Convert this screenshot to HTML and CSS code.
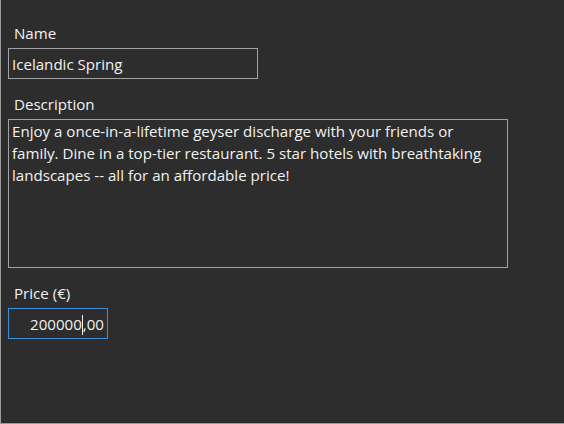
FILE: index.html
```html
<!DOCTYPE html>
<html>
<head>
<meta charset="utf-8">
<link rel="stylesheet" href="styles.css">
</head>
<body>
<div class="window">
  <div class="form">
    <div class="label">Name</div>
    <div class="field name">Icelandic Spring</div>
    <div class="label desc-label">Description</div>
    <div class="field area">Enjoy a once-in-a-lifetime geyser discharge with your friends or family. Dine in a top-tier restaurant. 5 star hotels with breathtaking landscapes -- all for an affordable price!</div>
    <div class="label price-label">Price (€)</div>
    <div class="field price focused">200000<span class="caret"></span>,00</div>
  </div>
</div>
</body>
</html>
```
FILE: styles.css
```css
html, body {
  margin: 0;
  padding: 0;
  background: #2d2d2d;
}
.window {
  width: 564px;
  height: 424px;
  box-sizing: border-box;
  border-left: 1px solid #9a9a9a;
  border-bottom: 1px solid #9a9a9a;
  background: #2d2d2d;
  font-family: "Open Sans", "Noto Sans", sans-serif;
  font-size: 15.1px;
  color: #f2f2f2;
}
.form {
  display: flex;
  flex-direction: column;
  align-items: flex-start;
  padding: 23px 0 0 7px;
}
.label {
  line-height: 20px;
  margin-left: 6px;
  margin-bottom: 5px;
}
.desc-label { margin-top: 15px; margin-bottom: 5px; }
.price-label { margin-top: 15px; margin-bottom: 5px; }
.field {
  box-sizing: border-box;
  border: 1px solid #a3a3a3;
  line-height: 22px;
  padding: 4px 3px 3px;
  white-space: nowrap;
}
.name {
  width: 250px;
  height: 31px;
}
.area {
  width: 500px;
  height: 149px;
  white-space: normal;
  padding: 0 8px 0 3px;
}
.price {
  width: 100px;
  height: 31px;
  text-align: right;
}
.focused {
  border-color: #3f8fd8;
}
.caret {
  display: inline-block;
  width: 1px;
  height: 20px;
  background: #f2f2f2;
  vertical-align: -5px;
}
```
